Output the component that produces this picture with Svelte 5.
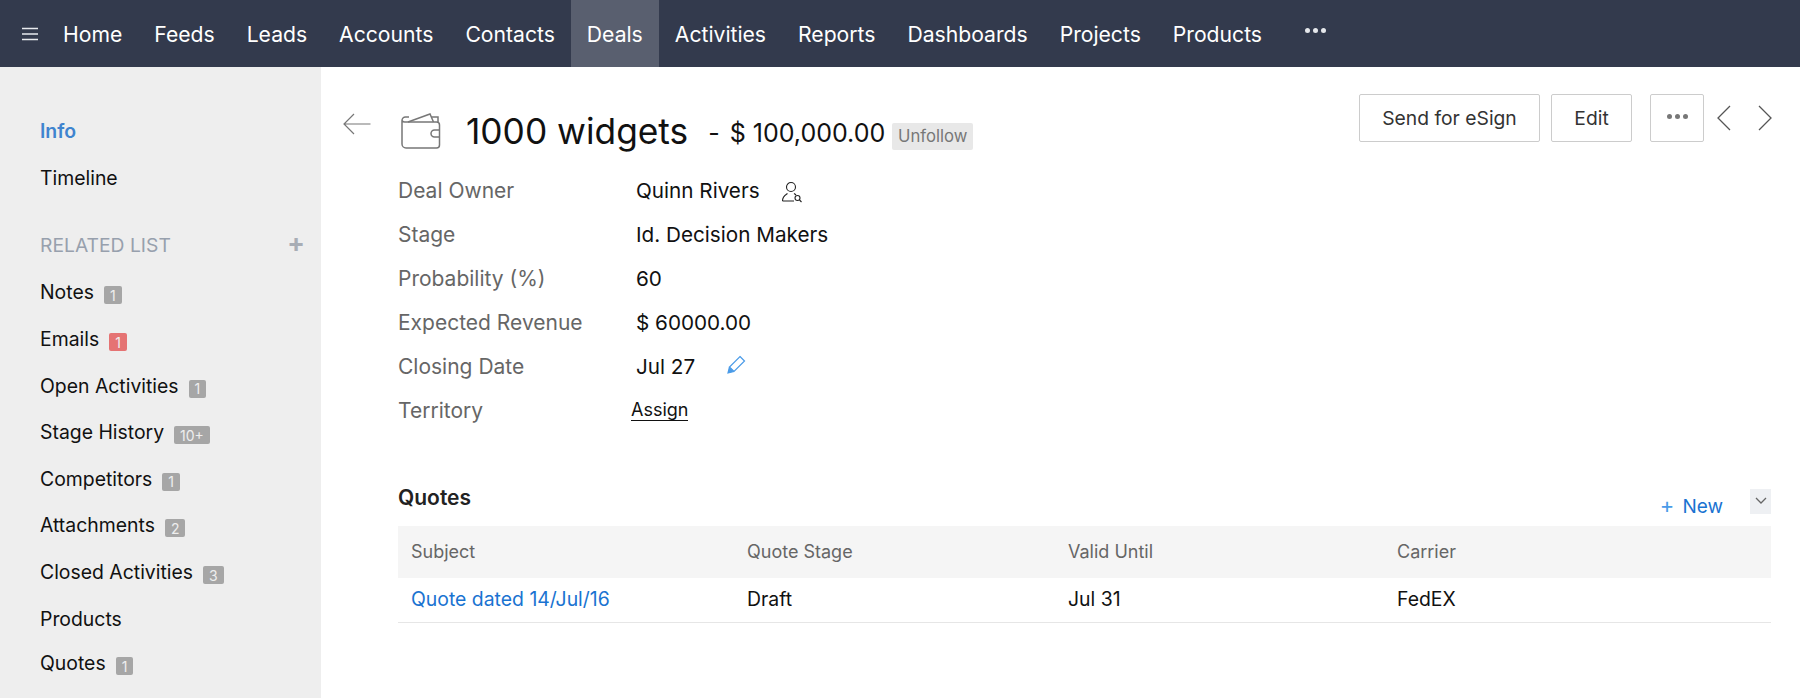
<script>
  const nav = ['Home','Feeds','Leads','Accounts','Contacts','Deals','Activities','Reports','Dashboards','Projects','Products'];
  const related = [
    ['Notes','1'],['Emails','1',true],['Open Activities','1'],['Stage History','10+'],['Competitors','1'],
    ['Attachments','2'],['Closed Activities','3'],['Products',''],['Quotes','1']
  ];
</script>

<div class="page">
  <header class="top">
    <svg class="burger" width="18" height="14" viewBox="0 0 18 14"><path d="M1 1.500h16M1 7h16M1 12.500h16" stroke="#e8eaee" stroke-width="1.500" fill="none"/></svg>
    <nav class="nav">
      {#each nav as n}
        <span class="item" class:active={n==='Deals'}>{n}</span>
      {/each}
      <span class="more"><i></i><i></i><i></i></span>
    </nav>
  </header>
  <div class="body">
    <aside class="side">
      <div class="s-link info">Info</div>
      <div class="s-link">Timeline</div>
      <div class="rel-head"><span>RELATED LIST</span><span class="plus">+</span></div>
      {#each related as r}
        <div class="s-link rel">
          <span>{r[0]}</span>
          {#if r[1]}<span class="badge" class:red={r[2]}>{r[1]}</span>{/if}
        </div>
      {/each}
    </aside>
    <main class="main">
      <div class="head">
        <svg class="back" width="28" height="22" viewBox="0 0 28 22"><path d="M27.500 11H1M11 1 1 11l10 10" stroke="#777" stroke-width="1.200" fill="none"/></svg>
        <svg class="wallet" width="42" height="36" viewBox="0 0 42 36" fill="none" stroke="#777" stroke-width="1.500">
          <path d="M2 7.500V31a4 4 0 0 0 4 4h30.500a3 3 0 0 0 3-3V12a3 3 0 0 0-3-3H5.500A3.500 3.500 0 0 1 2 7.500 3.500 3.500 0 0 1 5.500 4H9"/>
          <path d="M8 9 30 1l3.500 8"/><path d="M31.500 4h6.500v5"/>
          <path d="M39.500 17h-5a3 3 0 0 0 0 7h5"/>
        </svg>
        <h1>1000 widgets</h1>
        <span class="amount"><span class="dash">-</span>$ 100,000.00</span>
        <span class="unfollow">Unfollow</span>
        <div class="actions">
          <button class="btn esign">Send for eSign</button>
          <button class="btn edit">Edit</button>
          <button class="btn dots"><i></i><i></i><i></i></button>
          <svg class="chev" width="14" height="26" viewBox="0 0 14 26"><path d="M13 1 1 13l12 12" stroke="#555" stroke-width="1.300" fill="none"/></svg>
          <svg class="chev r" width="14" height="26" viewBox="0 0 14 26"><path d="M1 1l12 12L1 25" stroke="#555" stroke-width="1.300" fill="none"/></svg>
        </div>
      </div>

      <div class="fields">
        <div class="lab">Deal Owner</div>
        <div class="val">Quinn Rivers
          <svg class="owner" width="22" height="22" viewBox="0 0 22 22" fill="none" stroke="#222" stroke-width="1.100"><circle cx="10" cy="6" r="4.500"/><path d="M1.500 20c0-5 3-6 5-7.500M13 12.500c.8.5 1.500 1 2 1.500M1.500 20H13"/><circle cx="16.500" cy="17" r="2.500"/><path d="m18.500 19 2 2"/></svg>
        </div>
        <div class="lab">Stage</div><div class="val">Id. Decision Makers</div>
        <div class="lab">Probability (%)</div><div class="val">60</div>
        <div class="lab">Expected Revenue</div><div class="val">$ 60000.00</div>
        <div class="lab">Closing Date</div>
        <div class="val">Jul 27
          <svg class="pen" width="19" height="19" viewBox="0 0 19 19" fill="none" stroke="#4a9be8" stroke-width="1.200"><path d="M13 1.500 17.500 6 7 16.500 2.500 12z"/><path d="M2.500 12 1 18l6-1.500" fill="#4a9be8"/></svg>
        </div>
        <div class="lab">Territory</div><div class="val assign"><span>Assign</span></div>
      </div>

      <section class="quotes">
        <div class="q-head">
          <h2>Quotes</h2>
          <div class="q-tools">
            <span class="new"><span class="p">+</span>New</span>
            <span class="caret"><svg width="12" height="8" viewBox="0 0 12 8"><path d="M1 1l5 5 5-5" stroke="#666" stroke-width="1.300" fill="none"/></svg></span>
          </div>
        </div>
        <div class="t-row th"><span>Subject</span><span>Quote Stage</span><span>Valid Until</span><span>Carrier</span></div>
        <div class="t-row td"><span class="link">Quote dated 14/Jul/16</span><span>Draft</span><span>Jul 31</span><span>FedEX</span></div>
      </section>
    </main>
  </div>
</div>

<style>
  :global(body){margin:0;background:#fff;}
  .page{width:1800px;height:698px;overflow:hidden;font-family:"Inter","Liberation Sans",sans-serif;color:#111;display:flex;flex-direction:column;}
  .top{height:67px;background:#333a4d;display:flex;align-items:center;flex:none;}
  .burger{margin-left:21px;margin-right:8px;flex:none;}
  .nav{display:flex;align-self:stretch;}
  .item{padding:1px 16px 0;display:flex;align-items:center;color:#fff;font-size:21.150px;}
  .item.active{background:#595f6f;}
  .more{display:flex;gap:3px;margin-left:27px;padding-bottom:7px;align-items:center;}
  .more i{width:5px;height:5px;border-radius:50%;background:#e6e8ec;display:block;}
  .body{flex:1;display:flex;min-height:0;}
  .side{width:321px;flex:none;background:#eee;padding:41px 0 0 40px;box-sizing:border-box;}
  .s-link{height:46.600px;display:flex;align-items:center;font-size:19.400px;color:#111;}
  .s-link:last-child{margin-top:-2px;}
  .info{color:#3f84cf;font-weight:600;}
  .rel-head{height:47px;margin-top:20px;margin-bottom:1px;display:flex;align-items:center;justify-content:space-between;padding-right:16px;color:#97a0ad;font-size:19.300px;}
  .plus{font-size:26px;font-weight:700;color:#a8adb5;line-height:26px;margin-top:-3px;}
  .badge{margin-left:10px;margin-top:6px;background:#a6a6a6;color:#eee;font-size:14px;height:18px;padding:0 6px;border-radius:2px;display:flex;align-items:center;justify-content:center;box-sizing:border-box;}
  .badge.red{background:#e57373;}
  .main{flex:1;padding:27px 29px 0 22px;min-width:0;}
  .head{display:flex;align-items:center;height:74px;position:relative;}
  .back{margin-top:-14px;flex:none;}
  .wallet{margin-left:29px;flex:none;margin-top:0;}
  h1{margin:0 0 0 24px;font-size:35.300px;font-weight:400;color:#111;}
  .amount{margin-left:20px;font-size:25px;color:#111;margin-top:3px;}
  .dash{margin-right:10px;}
  .unfollow{margin-left:7px;background:#e8e8e8;color:#777;font-size:16.700px;width:81px;justify-content:center;height:27px;display:flex;align-items:center;border-radius:2px;margin-top:10px;}
  .actions{margin-left:auto;margin-right:-1px;display:flex;align-items:center;align-self:flex-start;}
  .btn{height:48px;border:1px solid #ccc;background:#fff;border-radius:2px;font-family:inherit;font-size:19.300px;color:#333;box-sizing:border-box;padding:0;}
  .esign{width:181px;}
  .edit{width:81px;margin-left:11px;}
  .dots{width:54px;margin-left:18px;display:flex;gap:3px;justify-content:center;align-items:center;padding:0 0 4px;}
  .dots i{width:5px;height:5px;border-radius:50%;background:#777;display:block;}
  .chev{margin-left:13px;flex:none;}
  .chev.r{margin-left:27px;}
  .fields{display:grid;grid-template-columns:238px 1fr;grid-auto-rows:44px;padding-left:55px;margin-top:.5px;align-items:center;}
  .lab{color:#666;font-size:21px;}
  .val{color:#111;display:flex;align-items:center;font-size:20.700px;}
  .owner{margin-left:21px;margin-top:2px;}
  .pen{margin-left:32px;margin-top:-4px;}
  .assign{margin-left:-5px;font-size:18px;}
  .assign span{border-bottom:1px solid #111;line-height:20px;}
  .quotes{margin-left:55px;margin-top:44px;}
  .q-head{display:flex;justify-content:space-between;align-items:flex-start;height:49px;}
  h2{margin:0;font-size:21px;font-weight:600;color:#222;line-height:28px;padding-top:7px;}
  .q-tools{display:flex;align-items:flex-start;padding-top:12px;}
  .new{font-size:19px;color:#1a73d1;line-height:26px;margin-top:3px;}
  .p{color:#4a9be8;margin-right:8px;font-size:22px;}
  .caret{width:21px;height:25px;background:#eef0f3;margin-left:27px;display:flex;align-items:center;justify-content:center;}
  .t-row{display:grid;grid-template-columns:336px 321px 329px 1fr;padding-left:13px;align-items:center;}
  .th{height:52px;background:#f5f5f5;color:#666;font-size:18px;}
  .td{height:45px;padding-bottom:2px;box-sizing:border-box;border-bottom:1px solid #e6e6e6;color:#111;font-size:19.400px;}
  .link{color:#1a73d1;}
</style>
